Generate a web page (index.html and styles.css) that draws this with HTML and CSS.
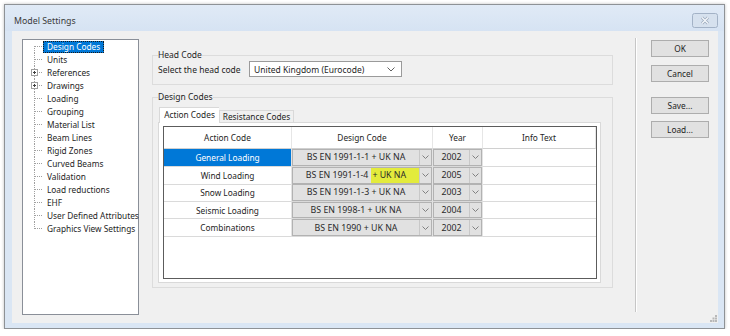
FILE: index.html
```html
<!DOCTYPE html>
<html>
<head>
<meta charset="utf-8">
<link rel="stylesheet" href="styles.css">
</head>
<body>
<div class="window">
  <div class="titlebar">
    <span class="title">Model Settings</span>
    <span class="close">
      <svg width="26" height="15" viewBox="0 0 26 15">
        <rect x="0.5" y="0.5" width="25" height="14" rx="2" fill="#d6e1ee" stroke="#a3b2c6"/>
        <path d="M10 4.5 L16 10.5 M16 4.5 L10 10.5" stroke="#9eabbd" stroke-width="3"/>
        <path d="M10 4.5 L16 10.5 M16 4.5 L10 10.5" stroke="#f4f7fb" stroke-width="1.4"/>
      </svg>
    </span>
  </div>
  <div class="client">
    <div class="tree">
      <div class="item first"><span class="label selected">Design Codes</span></div>
      <div class="item"><span class="label">Units</span></div>
      <div class="item"><span class="exp"><svg width="7" height="7" viewBox="0 0 7 7"><rect x="0.5" y="0.5" width="6" height="6" fill="#fff" stroke="#a0a0a0"/><path d="M2 3.5 H5 M3.5 2 V5" stroke="#404040"/></svg></span><span class="label">References</span></div>
      <div class="item"><span class="exp"><svg width="7" height="7" viewBox="0 0 7 7"><rect x="0.5" y="0.5" width="6" height="6" fill="#fff" stroke="#a0a0a0"/><path d="M2 3.5 H5 M3.5 2 V5" stroke="#404040"/></svg></span><span class="label">Drawings</span></div>
      <div class="item"><span class="label">Loading</span></div>
      <div class="item"><span class="label">Grouping</span></div>
      <div class="item"><span class="label">Material List</span></div>
      <div class="item"><span class="label">Beam Lines</span></div>
      <div class="item"><span class="label">Rigid Zones</span></div>
      <div class="item"><span class="label">Curved Beams</span></div>
      <div class="item"><span class="label">Validation</span></div>
      <div class="item"><span class="label">Load reductions</span></div>
      <div class="item"><span class="label">EHF</span></div>
      <div class="item"><span class="label">User Defined Attributes</span></div>
      <div class="item last"><span class="label">Graphics View Settings</span></div>
    </div>

    <div class="main">
      <fieldset class="group head-group">
        <legend>Head Code</legend>
        <div class="head-row">
          <span class="head-label">Select the head code</span>
          <div class="select">
            <span>United Kingdom (Eurocode)</span>
            <svg width="8" height="5" viewBox="0 0 8 5"><path d="M0.5 0.5 L4 4 L7.5 0.5" fill="none" stroke="#606060"/></svg>
          </div>
        </div>
      </fieldset>

      <fieldset class="group codes-group">
        <legend>Design Codes</legend>
        <div class="tabs">
          <div class="tab active">Action Codes</div>
          <div class="tab">Resistance Codes</div>
        </div>
        <div class="panel">
          <div class="grid">
            <div class="row head">
              <div class="c">Action Code</div>
              <div class="c">Design Code</div>
              <div class="c">Year</div>
              <div class="c">Info Text</div>
            </div>
            <div class="row">
              <div class="c name sel">General Loading</div>
              <div class="c"><div class="combo"><span class="val">BS EN 1991-1-1 + UK NA</span><span class="arr"><svg width="7" height="4" viewBox="0 0 7 4"><path d="M0.5 0.5 L3.5 3.5 L6.5 0.5" fill="none" stroke="#808080"/></svg></span></div></div>
              <div class="c"><div class="combo"><span class="val">2002</span><span class="arr"><svg width="7" height="4" viewBox="0 0 7 4"><path d="M0.5 0.5 L3.5 3.5 L6.5 0.5" fill="none" stroke="#808080"/></svg></span></div></div>
              <div class="c info"></div>
            </div>
            <div class="row">
              <div class="c name">Wind Loading</div>
              <div class="c"><div class="combo"><span class="val">BS EN 1991-1-4 <span class="hl">+ UK NA</span></span><span class="arr"><svg width="7" height="4" viewBox="0 0 7 4"><path d="M0.5 0.5 L3.5 3.5 L6.5 0.5" fill="none" stroke="#808080"/></svg></span></div></div>
              <div class="c"><div class="combo"><span class="val">2005</span><span class="arr"><svg width="7" height="4" viewBox="0 0 7 4"><path d="M0.5 0.5 L3.5 3.5 L6.5 0.5" fill="none" stroke="#808080"/></svg></span></div></div>
              <div class="c info"></div>
            </div>
            <div class="row">
              <div class="c name">Snow Loading</div>
              <div class="c"><div class="combo"><span class="val">BS EN 1991-1-3 + UK NA</span><span class="arr"><svg width="7" height="4" viewBox="0 0 7 4"><path d="M0.5 0.5 L3.5 3.5 L6.5 0.5" fill="none" stroke="#808080"/></svg></span></div></div>
              <div class="c"><div class="combo"><span class="val">2003</span><span class="arr"><svg width="7" height="4" viewBox="0 0 7 4"><path d="M0.5 0.5 L3.5 3.5 L6.5 0.5" fill="none" stroke="#808080"/></svg></span></div></div>
              <div class="c info"></div>
            </div>
            <div class="row">
              <div class="c name">Seismic Loading</div>
              <div class="c"><div class="combo"><span class="val">BS EN 1998-1 + UK NA</span><span class="arr"><svg width="7" height="4" viewBox="0 0 7 4"><path d="M0.5 0.5 L3.5 3.5 L6.5 0.5" fill="none" stroke="#808080"/></svg></span></div></div>
              <div class="c"><div class="combo"><span class="val">2004</span><span class="arr"><svg width="7" height="4" viewBox="0 0 7 4"><path d="M0.5 0.5 L3.5 3.5 L6.5 0.5" fill="none" stroke="#808080"/></svg></span></div></div>
              <div class="c info"></div>
            </div>
            <div class="row">
              <div class="c name">Combinations</div>
              <div class="c"><div class="combo"><span class="val">BS EN 1990 + UK NA</span><span class="arr"><svg width="7" height="4" viewBox="0 0 7 4"><path d="M0.5 0.5 L3.5 3.5 L6.5 0.5" fill="none" stroke="#808080"/></svg></span></div></div>
              <div class="c"><div class="combo"><span class="val">2002</span><span class="arr"><svg width="7" height="4" viewBox="0 0 7 4"><path d="M0.5 0.5 L3.5 3.5 L6.5 0.5" fill="none" stroke="#808080"/></svg></span></div></div>
              <div class="c info"></div>
            </div>
          </div>
        </div>
      </fieldset>
    </div>

    <div class="sep"></div>

    <div class="buttons">
      <div class="btn">OK</div>
      <div class="btn cancel">Cancel</div>
      <div class="btn save">Save...</div>
      <div class="btn load">Load...</div>
    </div>

    <span class="grip">
      <svg width="7" height="7" viewBox="0 0 7 7" fill="#b8b8b8"><rect x="5" y="0" width="2" height="2"/><rect x="2.5" y="2.5" width="2" height="2"/><rect x="5" y="2.5" width="2" height="2"/><rect x="0" y="5" width="2" height="2"/><rect x="2.5" y="5" width="2" height="2"/><rect x="5" y="5" width="2" height="2"/></svg>
    </span>
  </div>
</div>
</body>
</html>
```
FILE: styles.css
```css
html, body {
  margin: 0;
  background: #ffffff;
}
body {
  padding: 4px 0 0 4px;
  font-family: "Noto Sans", "DejaVu Sans", sans-serif;
  font-size: 8.3px;
  color: #1e1e1e;
}
.window {
  width: 721px;
  height: 325px;
  box-sizing: border-box;
  border: 1px solid #8e9296;
  background: #dae6f4;
  box-shadow: 0 0 3px rgba(0, 0, 0, 0.25);
  padding: 0 6px 5px 7px;
  display: flex;
  flex-direction: column;
}
.titlebar {
  height: 26px;
  display: flex;
  align-items: flex-start;
  justify-content: space-between;
  margin: 0 -6px 0 -7px;
  padding: 0 6px 0 9px;
  background: linear-gradient(#e0eaf6, #d6e3f3);
}
.title {
  margin-top: 10px;
  font-size: 8.8px;
  color: #3a3a3a;
  line-height: 12px;
}
.close {
  margin-top: 8px;
  display: flex;
}
.client {
  position: relative;
  height: 292px;
  box-sizing: border-box;
  background: #f0f0f0;
  display: flex;
  align-items: flex-start;
  padding: 8px 0 0 10px;
}

/* tree */
.tree {
  width: 117px;
  height: 276px;
  box-sizing: border-box;
  border: 1px solid #8a8f98;
  background: #ffffff;
  flex-shrink: 0;
}
.item {
  position: relative;
  height: 13px;
  display: flex;
  align-items: center;
  padding-left: 20px;
  line-height: 12px;
  white-space: nowrap;
}
.item::before {
  content: "";
  position: absolute;
  left: 11px;
  top: 6px;
  width: 8px;
  border-top: 1px dotted #a0a0a0;
}
.item::after {
  content: "";
  position: absolute;
  left: 11px;
  top: 0;
  height: 13px;
  border-left: 1px dotted #a0a0a0;
}
.item.first::after {
  top: 6px;
  height: 7px;
}
.item.last::after {
  height: 7px;
}
.exp {
  position: absolute;
  left: 8px;
  top: 3px;
  display: flex;
  z-index: 1;
}
.label {
  padding: 0 3px 0 4px;
  height: 12px;
}
.label.selected {
  background: #0078d7;
  color: #ffffff;
  outline: 1px dotted #1a1a1a;
  outline-offset: -1px;
  padding-right: 4px;
}

/* main */
.main {
  margin-left: 13px;
  margin-top: 10px;
  width: 461px;
  flex-shrink: 0;
}
.group {
  margin: 0;
  border: 1px solid #dcdcdc;
  min-width: 0;
}
.group legend {
  padding: 0;
  line-height: 12px;
  font-size: 8.5px;
  color: #1e1e1e;
}
.head-group {
  padding: 0 5px 6px 5px;
  height: 36px;
  box-sizing: border-box;
}
.head-row {
  display: flex;
  align-items: center;
  height: 16px;
}
.head-label {
  width: 91px;
  font-size: 8.5px;
}
.select {
  width: 153px;
  height: 16px;
  box-sizing: border-box;
  border: 1px solid #9a9a9a;
  background: #ffffff;
  display: flex;
  align-items: center;
  justify-content: space-between;
  padding: 0 6px 0 4px;
  font-size: 8.5px;
}
.codes-group {
  margin-top: 6px;
  padding: 4px 11px 4px 5px;
  height: 197px;
  box-sizing: border-box;
}
.tabs {
  display: flex;
  align-items: flex-end;
  height: 15px;
  padding-left: 1px;
  position: relative;
  z-index: 1;
}
.tab {
  height: 12px;
  box-sizing: border-box;
  border: 1px solid #d9d9d9;
  border-bottom: none;
  background: #f0f0f0;
  width: 75px;
  text-align: center;
  white-space: nowrap;
  line-height: 11px;
  font-size: 8.3px;
}
.tab.active {
  width: 60px;
  height: 16px;
  margin-bottom: -1px;
  background: #ffffff;
  border-right: none;
  line-height: 14px;
}
.panel {
  border: 1px solid #d9d9d9;
  background: #ffffff;
  padding: 3px 3px 3px 4px;
  height: 161px;
  box-sizing: border-box;
}
.grid {
  border: 1px solid #5c5c5c;
  height: 153px;
  box-sizing: border-box;
  background: #ffffff;
}
.row {
  display: grid;
  grid-template-columns: 128px 141px 50px 1fr;
  height: 17.6px;
}
.row.head {
  height: 22px;
}
.c {
  box-sizing: border-box;
  display: flex;
  align-items: center;
  justify-content: center;
  white-space: nowrap;
  border-bottom: 1px solid #dadada;
  border-right: 1px solid #e3e3e3;
  font-size: 8.3px;
}
.head .c {
  border-right: 1px solid #e6e6e6;
  border-bottom: 1px solid #d0d0d0;
}
.c.name.sel {
  background: #0078d7;
  color: #ffffff;
}
.c.info {
  border-right: none;
}
.combo {
  width: 100%;
  height: 100%;
  box-sizing: border-box;
  background: #e1e1e1;
  border: 1px solid #b2b2b2;
  display: flex;
}
.val {
  flex: 1;
  display: flex;
  align-items: center;
  justify-content: center;
  color: #2a2a2a;
  font-size: 8.8px;
}
.hl {
  display: inline-block;
  background: #e3eb3c;
  line-height: 15px;
  padding: 0 14px 0 1px;
  margin: 0 -14px 0 3px;
}
.arr {
  width: 11px;
  border-left: 1px solid #c8c8c8;
  display: flex;
  align-items: center;
  justify-content: center;
}

/* separator and buttons */
.sep {
  width: 1px;
  height: 274px;
  margin-left: 22px;
  margin-top: -1px;
  background: #c6c6c6;
  border-right: 1px solid #ffffff;
  flex-shrink: 0;
}
.buttons {
  margin-left: 14px;
  margin-top: 1px;
  display: flex;
  flex-direction: column;
  flex-shrink: 0;
}
.btn {
  width: 58px;
  height: 17px;
  box-sizing: border-box;
  border: 1px solid #adadad;
  background: #e1e1e1;
  display: flex;
  align-items: center;
  justify-content: center;
  font-size: 8.3px;
}
.btn.cancel { margin-top: 8px; }
.btn.save { margin-top: 15px; }
.btn.load { margin-top: 7px; }
.grip {
  position: absolute;
  right: 1px;
  bottom: 1px;
  display: flex;
}
```
